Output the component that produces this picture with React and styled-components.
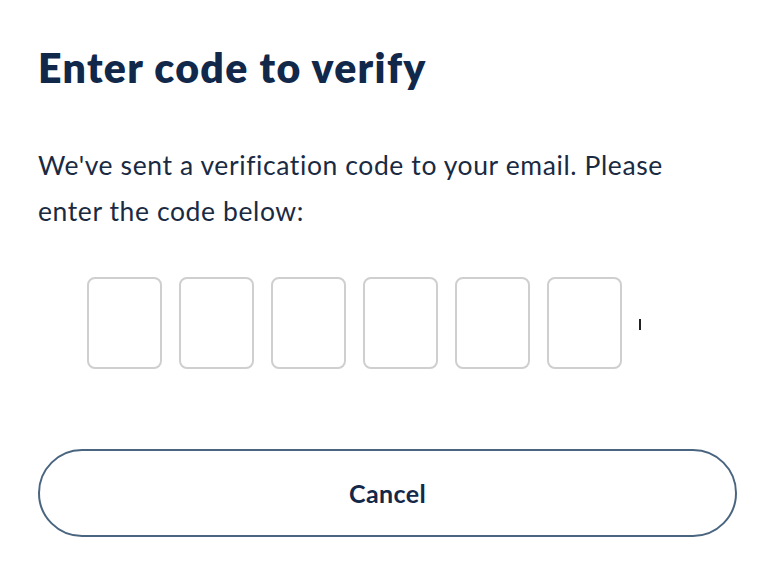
import React from "react";
import styled, { createGlobalStyle } from "styled-components";

const GlobalStyle = createGlobalStyle`
  html, body {
    margin: 0;
    padding: 0;
    background: #ffffff;
  }
  body {
    font-family: "Lato", "Noto Sans", sans-serif;
    color: #14284a;
  }
`;

const CODE_LENGTH = 6;

function App() {
  return (
    <>
      <GlobalStyle />
      <Container>
        <Heading>Enter code to verify</Heading>
        <Description>
          We've sent a verification code to your email. Please enter the code
          below:
        </Description>

        <CodeRow>
          {Array.from({ length: CODE_LENGTH }).map((_, index) => (
            <CodeBox key={index} />
          ))}
          <CaretSlot>
            <Caret />
          </CaretSlot>
        </CodeRow>

        <CancelButton type="button">Cancel</CancelButton>
      </Container>
    </>
  );
}

export default App;

const Container = styled.div`
  display: flex;
  flex-direction: column;
  padding: 44px 37px 0 38px;
`;

const Heading = styled.h1`
  margin: 0;
  font-size: 41px;
  line-height: 48px;
  font-weight: 800;
  letter-spacing: 1.35px;
  color: #11284a;
`;

const Description = styled.p`
  margin: 50px 0 0 0;
  max-width: 650px;
  font-size: 26.5px;
  line-height: 46px;
  letter-spacing: 0.6px;
  color: #1a2a42;
`;

const CodeRow = styled.div`
  display: flex;
  justify-content: center;
  align-items: center;
  gap: 17px;
  margin-top: 43px;
`;

const CodeBox = styled.div`
  box-sizing: border-box;
  width: 75px;
  height: 92px;
  border: 2px solid #cfcfcf;
  border-radius: 8px;
  background: #ffffff;
`;

const CaretSlot = styled.div`
  width: 50px;
  display: flex;
  align-items: center;
`;

const Caret = styled.span`
  display: block;
  width: 2px;
  height: 11px;
  margin-top: 2px;
  background: #222;
`;

const CancelButton = styled.button`
  box-sizing: border-box;
  margin-top: 80px;
  height: 88px;
  width: 100%;
  border: 2px solid #4a6580;
  border-radius: 44px;
  background: #ffffff;
  font-family: "Lato", "Noto Sans", sans-serif;
  font-size: 25px;
  font-weight: 700;
  letter-spacing: 0.4px;
  color: #14284a;
  cursor: pointer;
`;
